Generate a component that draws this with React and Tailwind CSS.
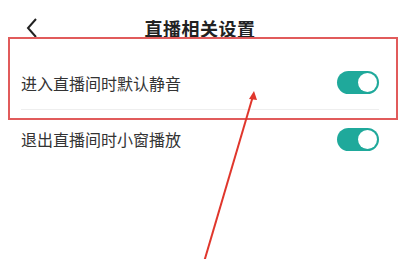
import React from 'react';

const Toggle = () => (
    <div className="w-[42px] h-[23px] rounded-full bg-[#1fa99b] flex items-center justify-end pr-[2px]">
        <div className="w-[19px] h-[19px] rounded-full bg-white"></div>
    </div>
);

const Row = ({ label, divider }) => (
    <div className={`flex items-center justify-between ml-[21px] mr-[21px] ${divider ? 'h-[54px] border-b border-[#eeeeee]' : 'h-[58px]'}`}>
        <span className="text-[16px] text-[#333333]">{label}</span>
        <Toggle />
    </div>
);

export default function App() {
    return (
        <div
            className="relative w-[400px] h-[259px] bg-white overflow-hidden"
            style={{ fontFamily: '"Noto Sans CJK SC", "Noto Sans", sans-serif' }}
        >
            <div className="relative h-[56px] flex items-center justify-center">
                <svg className="absolute left-[25px] top-[17px]" width="14" height="22" viewBox="0 0 14 22">
                    <path d="M11 2 L3 11 L11 20" fill="none" stroke="#222" strokeWidth="2" />
                </svg>
                <span className="text-[18px] font-bold text-[#222222] tracking-[0.5px]">直播相关设置</span>
            </div>

            <Row label="进入直播间时默认静音" divider />
            <Row label="退出直播间时小窗播放" />

            {/* annotation */}
            <div className="absolute left-[8px] top-[37px] w-[390px] h-[83px] border-2 border-[#e15b5b]"></div>
            <svg className="absolute left-0 top-0" width="400" height="259" viewBox="0 0 400 259">
                <line x1="253" y1="96" x2="204" y2="262" stroke="#e0362c" strokeWidth="2" />
                <path d="M254 91 L249 99 L257 100 Z" fill="#e0362c" />
            </svg>
        </div>
    );
}
